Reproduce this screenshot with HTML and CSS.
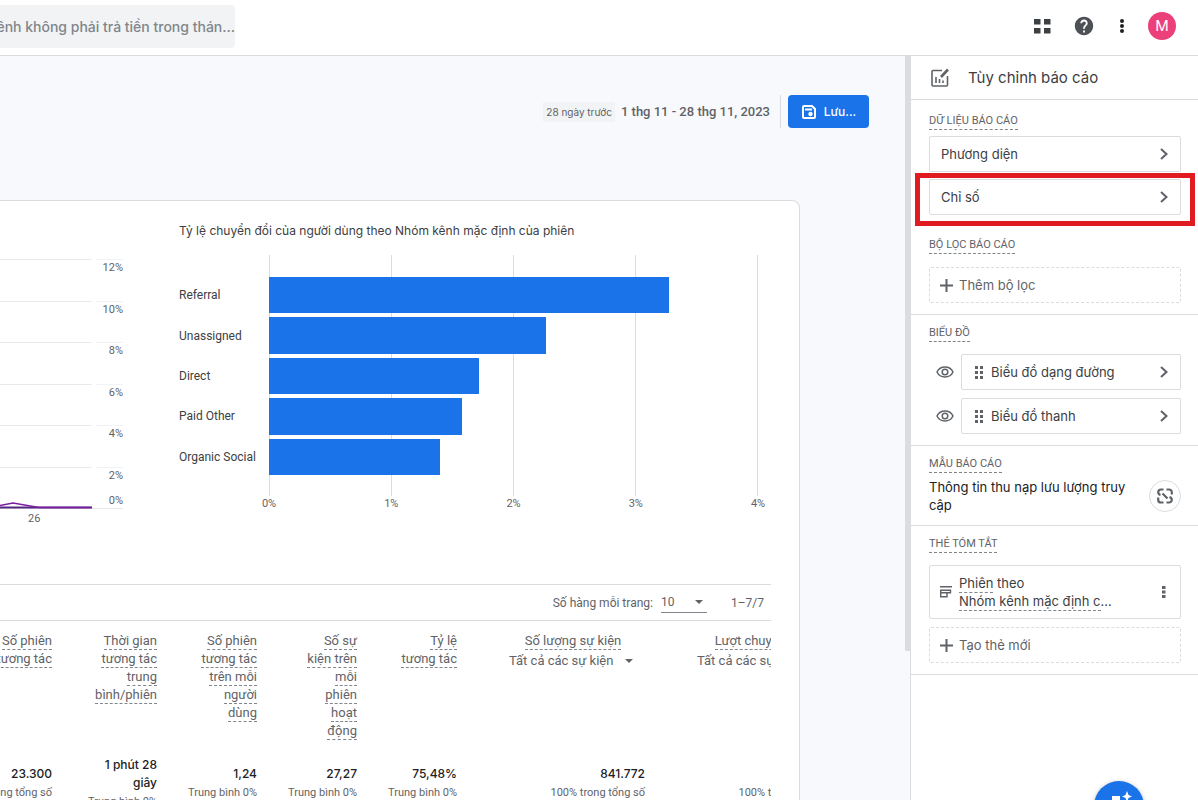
FILE: index.html
```html
<!DOCTYPE html>
<html lang="vi">
<head>
<meta charset="utf-8">
<title>Tùy chỉnh báo cáo</title>
<link rel="stylesheet" href="styles.css">
</head>
<body>
<header class="topbar">
  <input class="search" type="text" aria-label="Tìm kiếm" value="kênh không phải trả tiền trong thán...">
  <div class="topbar-actions">
    <button class="icon-btn" aria-label="Ứng dụng">
      <svg width="18" height="18" viewBox="0 0 18 18" fill="#3c4043"><path d="M1 2h6.500v5.500H1zM11 2h6.500v5.500H11zM1 11h6.500v5.500H1zM11 11h6.500v5.500H11z"/></svg>
    </button>
    <button class="icon-btn" aria-label="Trợ giúp">
      <svg width="22" height="22" viewBox="0 0 24 24" fill="#4d5156"><path d="M12 2C6.480 2 2 6.480 2 12s4.480 10 10 10 10-4.480 10-10S17.520 2 12 2zm1 17h-2v-2h2v2zm2.070-7.750l-.9.920C13.450 12.900 13 13.500 13 15h-2v-.5c0-1.100.45-2.100 1.170-2.830l1.240-1.260c.37-.36.59-.86.59-1.410 0-1.100-.9-2-2-2s-2 .9-2 2H8c0-2.210 1.790-4 4-4s4 1.790 4 4c0 .88-.36 1.680-.93 2.250z"/></svg>
    </button>
    <button class="icon-btn narrow" aria-label="Thêm">
      <svg width="6" height="18" viewBox="0 0 6 18" fill="#202124"><circle cx="3" cy="4" r="2"/><circle cx="3" cy="9" r="2"/><circle cx="3" cy="14" r="2"/></svg>
    </button>
    <button class="avatar" aria-label="Tài khoản">M</button>
  </div>
</header>

<div class="workspace">
  <main class="content">
    <div class="report-bar">
      <span class="chip">28 ngày trước</span>
      <span class="date-range">1 thg 11 - 28 thg 11, 2023</span>
      <span class="bar-divider"></span>
      <button class="save">
        <svg width="16" height="16" viewBox="0 0 16 16" fill="none" stroke="#fff" stroke-width="2"><path d="M2 3a1 1 0 0 1 1-1h8l3 3v8a1 1 0 0 1-1 1H3a1 1 0 0 1-1-1z"/><path d="M4 5.500h7"/><circle cx="9.500" cy="10" r="1.200" fill="#fff"/></svg>
        Lưu...
      </button>
    </div>

    <section class="card">
      <div class="charts">
        <figure class="line-chart">
          <div class="line-area">
            <div class="line-grid"><i></i><i></i><i></i><i></i><i></i><i></i>
              <svg class="line-series" width="92" height="10" viewBox="0 0 92 10" fill="none" stroke-width="2"><path d="M0 8.500h92" stroke="#54287f"/><path d="M0 6.500L13 4l26 4.500h53" stroke="#7b1fa2" stroke-width="1.500"/></svg>
            </div>
            <div class="line-axis"><span>12%</span><span>10%</span><span>8%</span><span>6%</span><span>4%</span><span>2%<b>0%</b></span></div>
          </div>
          <figcaption class="line-x">26</figcaption>
        </figure>

        <figure class="bar-chart">
          <figcaption>Tỷ lệ chuyển đổi của người dùng theo Nhóm kênh mặc định của phiên</figcaption>
          <div class="bar-area">
            <div class="bar-labels"><span>Referral</span><span>Unassigned</span><span>Direct</span><span>Paid Other</span><span>Organic Social</span></div>
            <div class="bar-plot">
              <div class="bar" style="width:82%"></div>
              <div class="bar" style="width:56.700%"></div>
              <div class="bar" style="width:43%"></div>
              <div class="bar" style="width:39.500%"></div>
              <div class="bar" style="width:35%"></div>
            </div>
          </div>
          <div class="bar-ticks"><span>0%</span><span>1%</span><span>2%</span><span>3%</span><span>4%</span></div>
        </figure>
      </div>

      <div class="data">
        <div class="pager">
          <label for="rows">Số hàng mỗi trang:</label>
          <span class="picker rows">
            <select id="rows"><option>10</option></select>
            <svg width="8" height="4" viewBox="0 0 8 4" fill="#5f6368"><path d="M0 0h8L4 4z"/></svg>
          </span>
          <span class="page-range">1–7/7</span>
        </div>
        <table>
          <colgroup><col class="c-first"><col class="c-time"><col class="c-num"><col class="c-num"><col class="c-num"><col class="c-event"><col class="c-event"></colgroup>
          <thead>
            <tr>
              <th><span class="term">Số phiên<br>tương tác</span></th>
              <th><span class="term">Thời gian<br>tương tác<br>trung<br>bình/phiên</span></th>
              <th><span class="term">Số phiên<br>tương tác<br>trên mỗi<br>người<br>dùng</span></th>
              <th><span class="term">Số sự<br>kiện trên<br>mỗi<br>phiên<br>hoạt<br>động</span></th>
              <th><span class="term">Tỷ lệ<br>tương tác</span></th>
              <th class="event">
                <div><span class="term">Số lượng sự kiện</span></div>
                <span class="picker"><select aria-label="Số lượng sự kiện"><option>Tất cả các sự kiện</option></select><svg width="8" height="4" viewBox="0 0 8 4" fill="#5f6368"><path d="M0 0h8L4 4z"/></svg></span>
              </th>
              <th class="event">
                <div><span class="term">Lượt chuyển đổi</span></div>
                <span class="picker"><select aria-label="Lượt chuyển đổi"><option>Tất cả các sự kiện</option></select><svg width="8" height="4" viewBox="0 0 8 4" fill="#5f6368"><path d="M0 0h8L4 4z"/></svg></span>
              </th>
            </tr>
          </thead>
          <tbody>
            <tr>
              <td><strong>23.300</strong><small>100% trong tổng số</small></td>
              <td><strong>1 phút 28<br>giây</strong><small>Trung bình 0%</small></td>
              <td><strong>1,24</strong><small>Trung bình 0%</small></td>
              <td><strong>27,27</strong><small>Trung bình 0%</small></td>
              <td><strong>75,48%</strong><small>Trung bình 0%</small></td>
              <td><strong>841.772</strong><small>100% trong tổng số</small></td>
              <td><strong>&nbsp;</strong><small>100% trong tổng số</small></td>
            </tr>
          </tbody>
        </table>
      </div>
    </section>
  </main>
  <div class="scroll-track"><div class="scroll-thumb"></div></div>

  <aside class="panel">
    <h2 class="panel-title">
      <svg width="20" height="20" viewBox="0 0 20 20" fill="none" stroke="#5f6368" stroke-width="1.600"><path d="M12 2.500H3a1 1 0 0 0-1 1V17a1 1 0 0 0 1 1h13.500a1 1 0 0 0 1-1V8"/><path d="M6 9v6M9.500 11v4M13 12.500V15"/><path d="M11 9l7-7.500" stroke-width="2.600"/></svg>
      Tùy chỉnh báo cáo
    </h2>
    <section class="group first">
      <h3>DỮ LIỆU BÁO CÁO</h3>
      <div class="stack tight">
        <button class="item">Phương diện <svg class="chev" width="10" height="14" viewBox="0 0 10 14"><path d="M2 2l5.500 5L2 12"/></svg></button>
        <button class="item marked">Chỉ số <svg class="chev" width="10" height="14" viewBox="0 0 10 14"><path d="M2 2l5.500 5L2 12"/></svg></button>
      </div>
      <h3 class="second">BỘ LỌC BÁO CÁO</h3>
      <div class="stack">
        <button class="item add"><svg width="13" height="13" viewBox="0 0 13 13"><path d="M6.500 0v13M0 6.500h13"/></svg>Thêm bộ lọc</button>
      </div>
    </section>
    <section class="group">
      <h3>BIỂU ĐỒ</h3>
      <div class="stack">
        <div class="chart-row">
          <button class="eye" aria-label="Ẩn biểu đồ dạng đường"><svg width="18" height="12" viewBox="0 0 18 12" fill="none" stroke="#5f6368" stroke-width="1.500"><path d="M1 6c1.600-3.300 4.600-5 8-5s6.400 1.700 8 5c-1.600 3.300-4.600 5-8 5S2.600 9.300 1 6z"/><circle cx="9" cy="6" r="2.800"/></svg></button>
          <button class="item"><svg class="grip" width="8" height="13" viewBox="0 0 8 13"><path d="M0 0h3v3H0zM5 0h3v3H5zM0 5h3v3H0zM5 5h3v3H5zM0 10h3v3H0zM5 10h3v3H5z"/></svg>Biểu đồ dạng đường <svg class="chev" width="10" height="14" viewBox="0 0 10 14"><path d="M2 2l5.500 5L2 12"/></svg></button>
        </div>
        <div class="chart-row">
          <button class="eye" aria-label="Ẩn biểu đồ thanh"><svg width="18" height="12" viewBox="0 0 18 12" fill="none" stroke="#5f6368" stroke-width="1.500"><path d="M1 6c1.600-3.300 4.600-5 8-5s6.400 1.700 8 5c-1.600 3.300-4.600 5-8 5S2.600 9.300 1 6z"/><circle cx="9" cy="6" r="2.800"/></svg></button>
          <button class="item"><svg class="grip" width="8" height="13" viewBox="0 0 8 13"><path d="M0 0h3v3H0zM5 0h3v3H5zM0 5h3v3H0zM5 5h3v3H5zM0 10h3v3H0zM5 10h3v3H5z"/></svg>Biểu đồ thanh <svg class="chev" width="10" height="14" viewBox="0 0 10 14"><path d="M2 2l5.500 5L2 12"/></svg></button>
        </div>
      </div>
    </section>
    <section class="group">
      <h3>MẪU BÁO CÁO</h3>
      <div class="template">
        <p>Thông tin thu nạp lưu lượng truy cập</p>
        <button class="unlink" aria-label="Hủy liên kết"><svg width="18" height="18" viewBox="0 0 18 18" fill="none" stroke="#5f6368" stroke-width="2.200"><path d="M7.500 2.500H5A2.800 2.800 0 0 0 2.200 5.300c0 1.300.8 2.200 2.300 2.700M10.500 2.500H13a2.800 2.800 0 0 1 2.800 2.800V7.500M7.500 15.500H5a2.800 2.800 0 0 1-2.800-2.800V10.500M10.500 15.500H13a2.800 2.800 0 0 0 2.800-2.800c0-1.300-.8-2.200-2.300-2.700M6.500 6.500l5 5"/></svg></button>
      </div>
    </section>
    <section class="group">
      <h3>THẺ TÓM TẮT</h3>
      <div class="stack">
        <div class="item summary">
          <svg width="12" height="12" viewBox="0 0 12 12" fill="none" stroke="#5f6368" stroke-width="1.400"><path d="M0 .7h12M0 4.200h10.500v2.600H0M.7 3.500v8M0 10.800h7V7"/></svg>
          <p><span class="term">Phiên</span> theo<br><span class="term">Nhóm kênh mặc định c</span>...</p>
          <button class="more" aria-label="Tùy chọn"><svg width="4" height="12" viewBox="0 0 4 12" fill="#5f6368"><path d="M0 0h3.500v3H0zM0 4.500h3.500v3H0zM0 9h3.500v3H0z"/></svg></button>
        </div>
        <button class="item add"><svg width="13" height="13" viewBox="0 0 13 13"><path d="M6.500 0v13M0 6.500h13"/></svg>Tạo thẻ mới</button>
      </div>
    </section>
  </aside>
</div>
<button class="fab" aria-label="Thông tin chi tiết"><svg width="24" height="24" viewBox="0 0 24 24" fill="#fff"><path d="M20 -3l1.500 4L25 2.500 21.500 4 20 8l-1.500-4L15 2.500 18.500 1z"/><path d="M5 2h8v4H8v11h10v-6h3v9H5z"/></svg></button>
</body>
</html>
```
FILE: styles.css
```css
* { box-sizing: border-box; }
body {
  margin: 0;
  height: 100vh;
  display: flex;
  flex-direction: column;
  overflow: hidden;
  background: #fff;
  color: #3c4043;
  font: 13px/18px Inter, "Noto Sans", sans-serif;
}
button, select, input { font: inherit; color: inherit; }
button { border: 0; padding: 0; background: none; cursor: pointer; }
svg { flex: none; display: block; overflow: visible; }
figure, p, h2, h3 { margin: 0; }

.topbar {
  flex: none;
  height: 56px;
  display: flex;
  align-items: center;
  justify-content: space-between;
  padding: 0 22px 3px 0;
  border-bottom: 1px solid #dadce0;
}
.search {
  width: 315px;
  height: 43px;
  margin-left: -80px;
  padding: 0;
  border: 0;
  border-radius: 4px;
  background: #f1f3f4;
  color: #80868b;
  font-size: 14px;
  font-weight: 500;
  text-align: right;
}
.topbar-actions { display: flex; align-items: center; gap: 18px; }
.icon-btn { width: 24px; height: 24px; display: grid; place-items: center; }
.icon-btn.narrow { width: 16px; }
.avatar {
  width: 28px;
  height: 28px;
  border-radius: 50%;
  background: #ec407a;
  color: #fff;
  font-size: 15px;
}

.workspace { flex: 1; min-height: 0; display: flex; }
.content { flex: 1; min-width: 0; overflow: hidden; background: #f8f9fd; }
.scroll-track { flex: none; width: 5px; background: #f8f9fd; }
.scroll-thumb { height: 80%; background: #dadce0; }

.report-bar {
  height: 144px;
  padding: 39px 36px 0 0;
  display: flex;
  align-items: flex-start;
  justify-content: flex-end;
  line-height: 33px;
}
.chip {
  margin: 7px 6px 0 0;
  padding: 0 3px;
  background: #f1f3f4;
  color: #5f6368;
  font-size: 10px;
  line-height: 20px;
}
.date-range { color: #5f6368; font: 500 13px/33px Roboto, sans-serif; }
.bar-divider { width: 1px; height: 33px; margin: 0 7px 0 10px; background: #dadce0; }
.save {
  width: 81px;
  height: 33px;
  display: flex;
  align-items: center;
  justify-content: center;
  gap: 7px;
  border-radius: 4px;
  background: #1a73e8;
  color: #fff;
  font-size: 12px;
  font-weight: 500;
}

.card {
  margin-right: 105px;
  padding: 21px 28px 0 0;
  height: 700px;
  border: 1px solid #dadce0;
  border-left: 0;
  border-radius: 0 8px 0 0;
  background: #fff;
}
.charts { display: flex; height: 362px; }
.line-chart { flex: none; width: 123px; margin-right: 56px; padding-top: 37px; }
.line-area { display: flex; gap: 4px; height: 250px; border-bottom: 1px solid #e8eaed; }
.line-grid { position: relative; width: 92px; display: grid; grid-template-rows: repeat(6, 1fr); }
.line-grid i { border-top: 1px solid #e8eaed; }
.line-series { position: absolute; left: 0; bottom: -1px; }
.line-axis { flex: 1; display: grid; grid-template-rows: repeat(6, 1fr); }
.line-axis span {
  display: flex;
  flex-direction: column;
  justify-content: space-between;
  border-top: 1px solid #f1f3f4;
  text-align: right;
}
.line-axis, .line-x, .bar-ticks { color: #5f6368; font: 11px/15px Roboto, sans-serif; }
.line-axis b { font-weight: 400; }
.line-x { padding: 2px 0 0 28px; }

.bar-chart { flex: 1; min-width: 0; padding-right: 13px; }
.bar-chart figcaption { white-space: nowrap; font-size: 12px; }
.bar-area { display: flex; height: 241px; margin-top: 15px; }
.bar-labels, .bar-plot { display: grid; grid-template-rows: repeat(5, 1fr); gap: 4px; padding: 22px 0 21px; }
.bar-labels { flex: none; width: 90px; align-items: center; font: 12px/18px Roboto, sans-serif; }
.bar-plot {
  flex: 1;
  border-right: 1px solid #dadce0;
  background: linear-gradient(to right, #dadce0 1px, transparent 1px) 0 0 / 25% 100%;
}
.bar { background: #1a73e8; }
.bar-ticks { display: flex; justify-content: space-between; margin-left: 90px; }
.bar-ticks span { width: 0; display: flex; justify-content: center; }

.data { overflow: hidden; border-top: 1px solid #dadce0; font-family: Roboto, sans-serif; }
.pager {
  height: 36px;
  display: flex;
  align-items: center;
  justify-content: flex-end;
  padding-right: 7px;
  border-bottom: 1px solid #dadce0;
  color: #5f6368;
  font-size: 12px;
}
.picker { display: inline-grid; align-items: center; }
.picker select, .picker svg { grid-area: 1 / 1; }
.picker svg { justify-self: end; margin-right: 4px; pointer-events: none; }
.picker select { appearance: none; border: 0; padding: 0 20px 0 0; background: none; }
.picker.rows { width: 46px; margin: 0 24px 0 8px; border-bottom: 1px solid #80868b; }
.picker.rows select { height: 20px; }

table { width: 893px; margin-left: -60px; table-layout: fixed; border-collapse: collapse; }
.c-first { width: 112px; }
.c-time { width: 105px; }
.c-num { width: 100px; }
.c-event { width: 188px; }
th, td { padding: 0; text-align: right; white-space: nowrap; }
th { padding: 11px 0 16px; vertical-align: top; color: #5f6368; font-size: 13px; font-weight: 400; }
.term { padding-bottom: 1px; border-bottom: 1px dashed #80868b; }
th.event { padding-right: 8px; }
th.event div { width: 128px; margin-left: auto; text-align: center; }
th.event .picker { width: 128px; height: 22px; }
td strong, td small { display: block; }
td strong { color: #202124; font: 500 12px/18px Inter, sans-serif; }
td small { color: #5f6368; font-size: 11px; line-height: 20px; }

.panel { flex: none; width: 288px; border-left: 1px solid #dadce0; background: #fff; }
.panel-title {
  height: 44px;
  display: flex;
  align-items: center;
  gap: 18px;
  padding-left: 19px;
  border-bottom: 1px solid #dadce0;
  font-size: 15px;
  font-weight: 400;
}
.group { padding: 9px 17px 11px 18px; border-bottom: 1px solid #dadce0; }
.group.first { padding-top: 12px; }
.group h3 {
  width: fit-content;
  border-bottom: 1px dashed #80868b;
  color: #5f6368;
  font: 11px/17px Roboto, sans-serif;
}
.group h3.second { margin-top: 21px; }
.stack { display: flex; flex-direction: column; gap: 8px; margin-top: 13px; }
.group:not(.first) .stack { margin-top: 12px; }
.group .stack.tight { gap: 7px; margin-top: 6px; }
.item {
  flex: 1;
  position: relative;
  min-height: 36px;
  display: flex;
  align-items: center;
  padding: 0 11px;
  border: 1px solid #dadce0;
  border-radius: 2px;
  text-align: left;
}
.chev { margin-left: auto; fill: none; stroke: #5f6368; stroke-width: 2; }
.item.marked::after { content: ""; position: absolute; inset: -7px -15px -12px; border: 5px solid #e11b22; }
.item.add { gap: 6px; padding: 0 10px; border-style: dashed; color: #5f6368; }
.item.add svg { stroke: #5f6368; stroke-width: 2; }
.chart-row { display: flex; align-items: center; gap: 7px; padding-left: 7px; }
.grip { margin: 0 8px 0 2px; fill: #5f6368; }
.template { display: flex; align-items: center; justify-content: space-between; gap: 16px; margin-top: 5px; color: #202124; }
.unlink { flex: none; width: 32px; height: 32px; display: grid; place-items: center; border: 1px solid #dadce0; border-radius: 50%; }
.summary { min-height: 54px; gap: 7px; padding: 0 14px 0 10px; }
.more { margin-left: auto; }

.fab {
  position: fixed;
  right: 54px;
  bottom: -31px;
  width: 50px;
  height: 50px;
  display: grid;
  place-items: center;
  border-radius: 50%;
  background: #1a73e8;
  box-shadow: 0 1px 4px #3c404366;
}
```
